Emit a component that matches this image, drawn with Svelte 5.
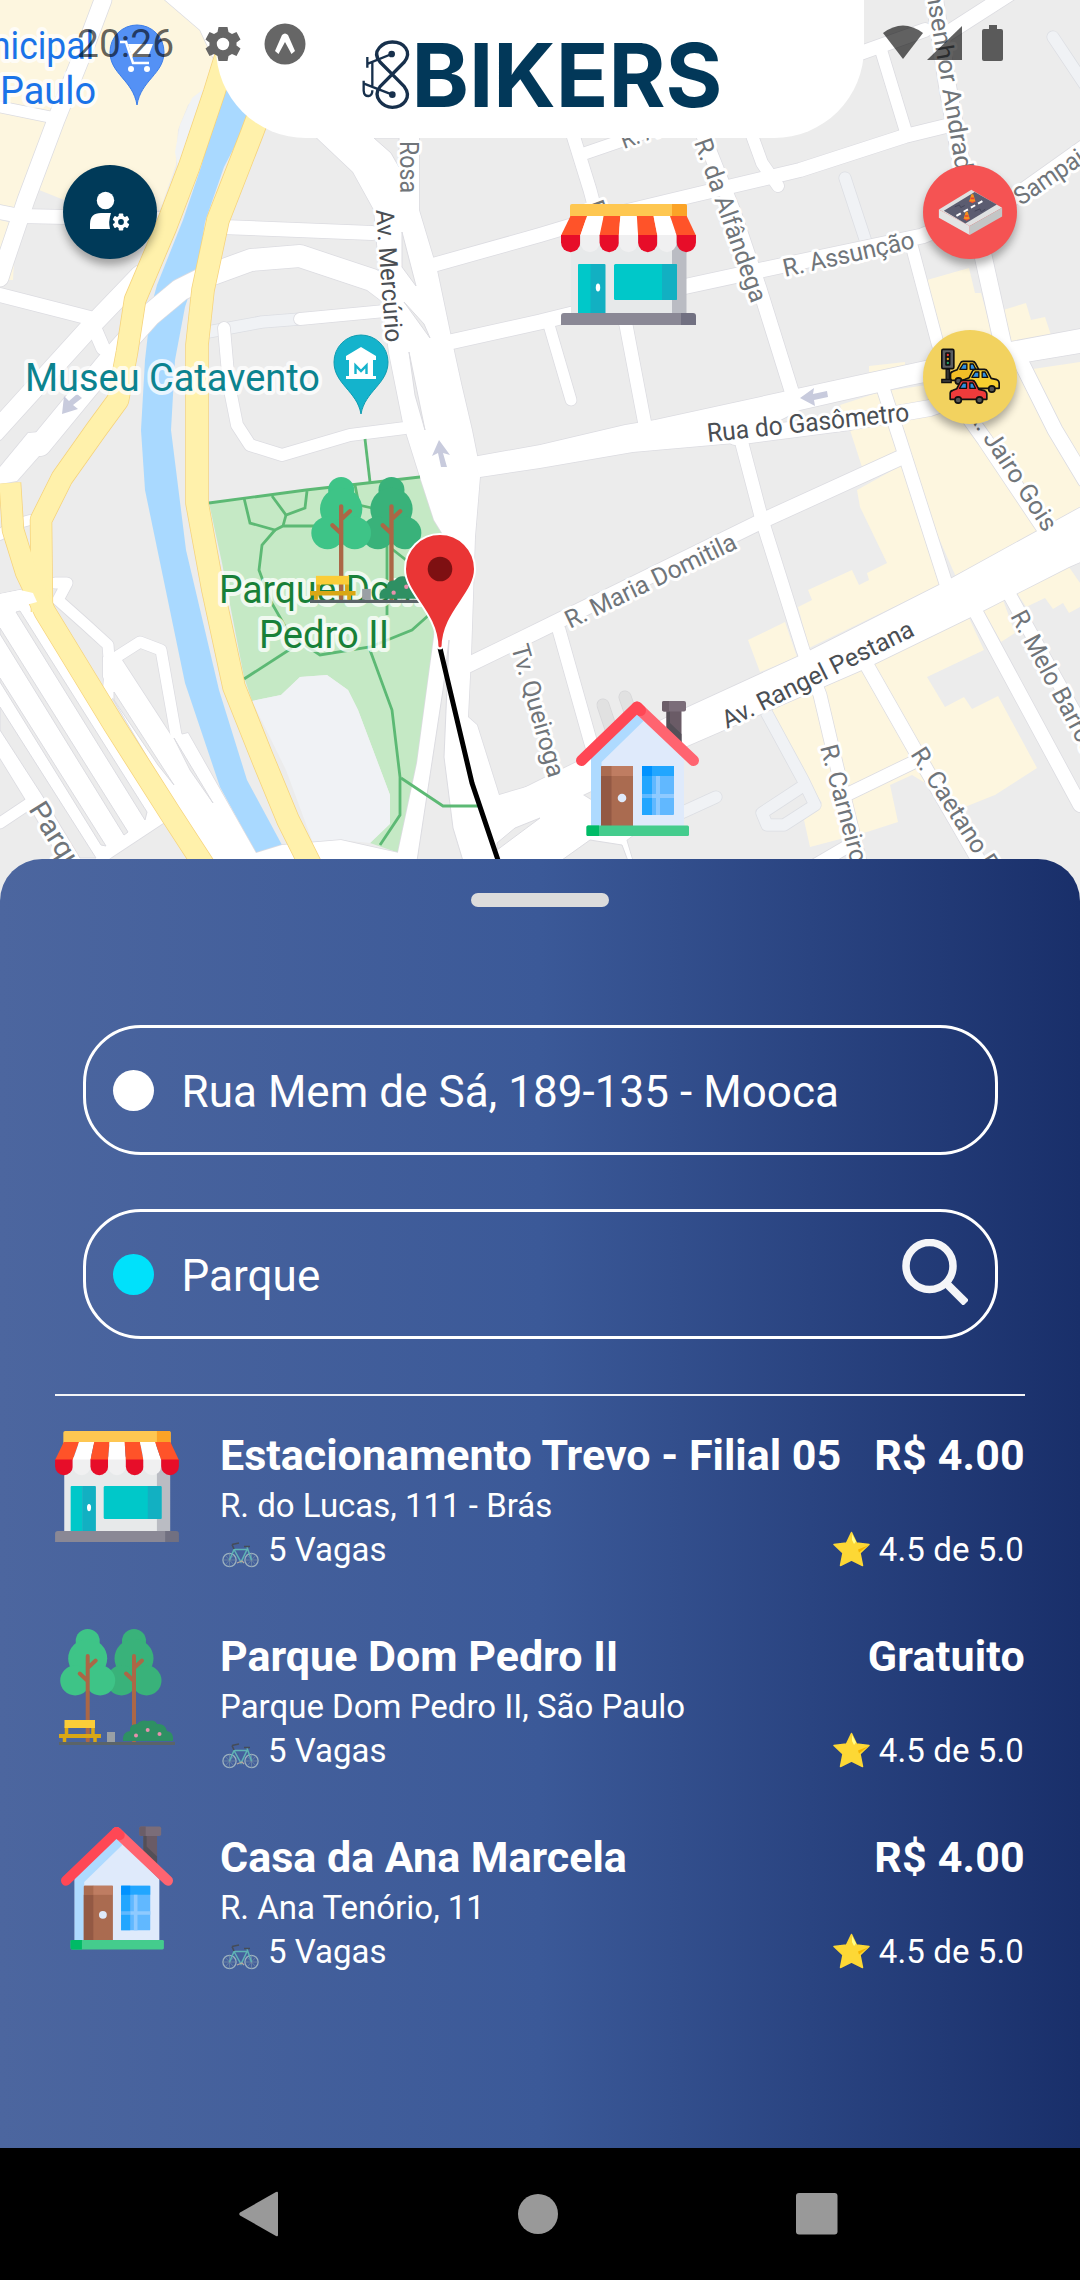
<script>
  // Map geometry, in screen units of the 1080 px wide canvas.
  const cream = [
    '0,0 167,0 208,35 217,63 205,88 188,105 178,130 176,165 160,210 64,200 39,190 30,215 0,215',
    '0,220 16,224 13,280 0,280',
    '927,280 969,268 975,293 981,293 995,345 940,345',
    '1003,310 1026,303 1031,320 1045,317 1051,335 1010,342',
    '840,405 880,392 1080,362 1080,507 956,577 900,450 862,467 850,430',
    '857,490 902,465 941,584 809,648 798,607 812,600 808,590 852,570 859,585 869,580 867,573 887,563 860,507',
    '869,366 905,362 905,370 869,372',
    '748,640 785,622 797,657 760,672',
    '768,712 862,670 969,618 984,650 927,677 945,707 964,697 972,709 998,696 1037,768 995,795 965,807 912,775 890,785 898,822 867,832 810,847 804,820 822,803 800,770',
    '983,610 1003,600 1015,633 1001,642',
    '1017,593 1069,567 1080,583 1080,607 1069,613 1063,603 1053,609 1045,598 1026,607',
  ];

  const minor = [
    ['M103 0L85 48L56 120L26 200L5 262L0 278', 17],
    ['M0 107L50 117', 11],
    ['M0 212L20 216L160 219', 14],
    ['M0 295L90 318L103 348', 14],
    ['M-5 432L92 325L140 275', 19],
    ['M40 445L110 360L150 315L180 290L210 275L251 260L300 256L372 280L405 305L430 345', 22],
    ['M222 227L372 233', 14],
    ['M300 319L385 311', 12],
    ['M224 328L229 385L237 425L250 445L282 455L350 435L405 428', 12],
    ['M433 265L540 235L590 220L690 196L800 170L905 136L950 125', 14],
    ['M450 342L540 322L678 288L780 266L922 236L1010 200L1090 143', 15],
    ['M572 132L590 190L626 325L646 430', 13],
    ['M549 325L571 400', 11],
    ['M580 155L650 131', 12],
    ['M702 132L733 210L760 290L795 402', 14],
    ['M741 440L762 520L803 650L820 695L836 763L862 870', 13],
    ['M750 130L762 163L778 186', 12],
    ['M881 50L906 132', 12],
    ['M855 55L925 30', 14],
    ['M945 35L1012 -8', 15],
    ['M934 -5L947 83L962 167L984 260L1003 345', 17],
    ['M955 398L985 440L1052 540', 15],
    ['M1020 360L1055 430L1085 480', 15],
    ['M912 247L938 345', 12],
    ['M882 385L900 440L948 590', 13],
    ['M902 457L764 520L540 630L468 665', 15],
    ['M559 630L590 740L633 885', 13],
    ['M1008 592L1080 722', 13],
    ['M972 605L1080 805', 14],
    ['M865 662L915 750L990 880', 14],
    ['M912 763L848 794', 13],
    ['M785 883L850 845', 13],
    ['M735 437L850 422L930 408L960 398', 16],
    ['M0 535L12 525L30 520', 10],
    ['M55 583L67 583L58 600L85 624L108 645L110 672L108 695', 11],
    ['M118 656L140 642L161 650L176 735L235 840', 11],
    ['M0 823L30 803', 11],
  ];

  const areas = [
    '317,138 353,172 374,210 382,300 389,353 403,423 420,477 434,520 442,533 434,637 417,763 390,890 552,890 590,840 583,795 540,783 499,795 477,725 468,717 471,657 475,537 480,477 477,455 472,430 461,383 451,337 437,270 419,210 419,138',
    '467,458 540,445 625,425 655,420 925,361 1010,342 1080,329 1080,353 1020,363 910,385 800,410 735,443 633,452 540,468 467,479',
    '480,810 540,780 686,708 797,657 941,584 1090,502 1090,558 1069,567 969,618 862,670 685,747 583,795 640,830 560,890 480,890',
    '0,467 28,433 62,430 17,481 0,484',
    '0,594 20,590 35,594 168,820 112,857 100,866 75,885 24,797 0,758',
    '103,657 122,660 172,737 188,733 256,853 282,845 341,840 399,853 399,890 226,890 114,700 103,677',
    '165,0 200,30 217,66 330,90 330,0',
  ];

  // blocks left between rail tracks and merging carriageways
  const islands = [
    'M374 138H399V167L391 153z',
    'M402 232L416 286L402 267z',
    'M404 302L424 324L430 338z',
    'M409 352L425 430L415 395z',
    'M449 640L444 757L453 828L463 861L417 861L443 690z',
    'M497 843L515 828L540 818L497 850z',
    'M16 612L20 611L147 812L145 820z',
    'M0 628L128 832L124 835L0 634z',
    'M0 678L106 846L101 845L0 682z',
    'M0 707L96 858L80 858L42 795L0 730z',
    'M548 870L590 840L622 845L628 861z',
    'M114 692L174 785L158 765L114 700z',
    'M174 738L213 803L190 770z',
  ];

  const yellow = [
    ['M236 22L214 93L189 167L166 227L135 300L127 352L118 400L96 430L62 478L41 520L42 612', 21],
    ['M10 483L13 530L26 572L45 612L114 725L170 813L222 893', 21],
    ['M270 85L252 133L218 220L203 290L197 345L197 430L197 503L213 590L234 687L262 757L288 820L318 880', 22],
  ];

  const parkPaths = [
    'M209 503L306 490L420 477', 'M365 439L370 482', 'M244 498L250 523L275 530L283 526H315',
    'M272 496L286 515L305 508L307 491', 'M286 515L283 526', 'M275 530L262 545L259 570L270 600L290 635L320 655L370 647L412 630L430 614',
    'M244 679L292 648', 'M355 485L359 505L372 508', 'M387 545V615', 'M392 549L406 560',
    'M370 650L392 710L400 777V815L380 845', 'M401 778L443 806H478',
  ];

  // text, x, y, angle, length, size, kind
  const streets = [
    ['Rosa', 400, 141, 90, 52, 25, ''],
    ['Av. Mercúrio', 376, 210, 85.8, 133, 25, 'main'],
    ['R. da Alfândega', 694, 142, 70.5, 172, 25, ''],
    ['R. Assunção', 785, 277, -12.6, 134, 25, ''],
    ['Rua do Gasômetro', 708, 442, -6, 203, 26, 'main'],
    ['nsenhor Andrade', 926, -8, 80.5, 195, 25, ''],
    ['Sampaio', 1021, 206, -34, 92, 25, ''],
    ['R. A', 624, 149, -20, 38, 25, ''],
    ['R.', 586, 204, 70, 22, 25, ''],
    ['R. Jairo Gois', 967, 414, 57, 142, 25, ''],
    ['R. Maria Domitila', 570, 629, -25.7, 187, 25, ''],
    ['Av. Rangel Pestana', 727, 729, -26.5, 211, 25, 'main'],
    ['R. Melo Barros', 1010, 616, 62, 158, 25, ''],
    ['R. Carneiro Leão', 820, 747, 75, 182, 25, ''],
    ['R. Caetano Pinto', 910, 754, 57.5, 184, 25, ''],
    ['Tv. Queiroga', 511, 647, 74, 137, 25, ''],
    ['Parque', 28, 809, 58, 92, 28, ''],
  ];

  const places = [
    { art: 'shop', name: 'Estacionamento Trevo - Filial 05', price: 'R$ 4.00', address: 'R. do Lucas, 111 - Brás' },
    { art: 'park', name: 'Parque Dom Pedro II', price: 'Gratuito', address: 'Parque Dom Pedro II, São Paulo' },
    { art: 'house', name: 'Casa da Ana Marcela', price: 'R$ 4.00', address: 'R. Ana Tenório, 11' },
  ];

  const teeth = [0, 60, 120, 180, 240, 300];
</script>

{#snippet shop()}
  <svg class="art-shop" viewBox="0 0 135 121">
    <path fill="#e7e9ea" d="M10 28H112V110H10z" />
    <path fill="#babcc3" d="M111 28H125.500V110H111z" />
    <rect x="9" width="117" height="15" rx="2" fill="#fec751" />
    <path fill="#fba327" d="M111 0H124Q126 0 126 2V14H111z" />
    {#each [0, 1, 2, 3, 4, 5, 6] as i}
      <path
        fill={i % 2 ? '#fff' : '#ff5329'}
        d="M{9.5 + i * 16.6} 12H{9.5 + (i + 1) * 16.6}L{(i + 1) * 19.28} 31.500H{i * 19.28}z"
      />
      <path
        fill={i % 2 ? '#f0f0f1' : '#e70d29'}
        d="M{i * 19.28} 31H{(i + 1) * 19.28}V38.500a9.640 9.640 0 0 1-19.280 0z"
      />
    {/each}
    <path fill="#00c8c9" d="M17 61Q17 60 18 60H30V109H17z" />
    <path fill="#12b0c2" d="M29.500 60H43.500Q44.500 60 44.500 61V109H29.500z" />
    <ellipse cx="37" cy="83.500" rx="2.200" ry="4" fill="#fff" />
    <rect x="53" y="60" width="63" height="36" rx="1.500" fill="#00c8c9" />
    <path fill="#12b0c2" d="M101 60H115Q116 60 116 61V95Q116 96 115 96H101z" />
    <path fill="#8a8895" d="M0 121V112Q0 109 3 109H121V121z" />
    <path fill="#717081" d="M120 109H132Q135 109 135 112V121H120z" />
  </svg>
{/snippet}

{#snippet tree(x, color)}
  <g fill={color} transform="translate({x} 0)">
    <circle cx="0" cy="12" r="12" />
    <circle cx="0" cy="29.500" r="19.500" />
    <circle cx="-12.500" cy="51.500" r="15" />
    <circle cx="12.500" cy="51.500" r="15" />
    <path fill="none" stroke="#ab6746" stroke-width="4" stroke-linecap="round" d="M0 27V112M0 39L8 31.500M0 52L-8 44.500" />
  </g>
{/snippet}

{#snippet park()}
  <svg class="art-park" viewBox="0 0 116 116">
    {@render tree(75, '#39b27a')}
    {@render tree(28.7, '#3ec487')}
    <path fill="#2e9063" d="M64 112Q63 103 71 102Q70 95 78 95Q82 90 89 92Q96 90 98 95Q106 94 108 102Q115 103 114 112z" />
    <g fill="#e791ad"><circle cx="77" cy="106.500" r="2" /><circle cx="88.700" cy="101" r="2" /><circle cx="100.500" cy="105" r="2" /></g>
    <path fill="#9aa0a5" d="M48 103H56V113H48z" />
    <path fill="#5b6468" d="M0 113H116V116H0z" />
    <path stroke="#d9a715" stroke-width="3.500" d="M7.500 97V106M34 97V106M5.500 108V113M36 108V113" />
    <path fill="#d9a715" d="M0 105H42V109H0z" />
    <rect x="5.500" y="91" width="30.500" height="8" fill="#fbcd38" />
  </svg>
{/snippet}

{#snippet house()}
  <svg class="art-house" viewBox="0 0 123 135">
    <path fill="#6a5b66" d="M90.500 8H105.500V42L90.500 28z" />
    <path fill="#544f57" d="M90.500 8H94V22L105.500 33V42L90.500 28z" />
    <rect x="86" width="24" height="10.500" rx="2" fill="#7b6d79" />
    <path fill="#6b5d68" d="M88 0H93V10.500H88Q86 10.500 86 8.500V2Q86 0 88 0z" />
    <path fill="#dfeafb" d="M61 11L108 58V126H15V58z" />
    <path fill="#aedaff" d="M15 57L61 13L67.500 20L25.500 61V126H15z" />
    <path fill="none" stroke="#ff6470" stroke-width="11" stroke-linecap="round" d="M61 6L117.500 59.500" />
    <path fill="none" stroke="#ff4755" stroke-width="11" stroke-linecap="round" stroke-linejoin="round" d="M5.500 59.500L61 6L64.500 9.500" />
    <rect x="25" y="65" width="32" height="61" rx="1" fill="#aa6b50" />
    <path fill="#bf7d62" d="M35 65H57V75H35z" />
    <path fill="#935944" d="M25 75H35.500V126H25z" />
    <path fill="#aa6b50" d="M25.500 65H35.500V75H25.500z" />
    <circle cx="46" cy="97" r="4.300" fill="#dfeafb" />
    <rect x="66" y="65" width="32" height="49" rx="1" fill="#61b8ff" />
    <path fill="#22a6ff" d="M66 65H98V75H76V114H66z" />
    <path fill="#8fcaff" d="M80 75H84V114H80zM76 93H98V97H76z" />
    <path fill="#0092ff" d="M66 65H76V75H66z" />
    <path fill="#5fb9ff" d="M66 93H76V97H66z" />
    <rect x="10.500" y="124.500" width="102.500" height="10.500" rx="1.500" fill="#44cc8d" />
    <path fill="#00bb66" d="M12 124.500H23V135H12Q10.500 135 10.500 133.500V126Q10.500 124.500 12 124.500z" />
  </svg>
{/snippet}

{#snippet car(x, y, color)}
  <g transform="translate({x} {y})" stroke="#111" stroke-width="5" stroke-linejoin="round">
    <path fill={color} d="M2 60V42Q2 35 10 33L22 28L32 8Q34 3 40 3H68Q74 3 77 9L88 30L105 34Q112 37 112 45V60z" />
    <path fill="#2f8fe0" stroke-width="4" d="M30 27L40 11H51V27zM61 11H70L78 27H61z" />
    <circle cx="26" cy="62" r="9.500" fill="#555" />
    <circle cx="90" cy="62" r="9.500" fill="#555" />
  </g>
{/snippet}

<div class="phone">
  <section class="map">
    <svg class="canvas" viewBox="0 0 1080 901">
      <rect width="1080" height="901" fill="#ececec" />
      {#each cream as points}<polygon {points} fill="#fdf6df" />{/each}
      <path fill="#f1f3f5" d="M205 88L192 98L180 125L175 152L178 168z" />
      <path fill="#a9d9ff" d="M222 90L250 95L250 117L224 167L205 222L198 268L185 307L175 360L171 430L186 550L219 690L247 780L282 845L256 853L220 787L185 683L145 490L141 430L145 360L151 307L157 285L183 220L201 167z" />
      <path fill="#c5e9c5" d="M209 503L420 477L434 520L442 533L434 637L417 763L399 853L370 843L389 824L390 795L358 710L348 690L327 675L300 677L281 695L252 701L244 677L222 563z" />
      <path fill="#f0f2f5" d="M252 701L281 695L300 677L327 675L348 690L358 710L390 795V824L370 843L341 840L313 843L286 770z" />
      <g fill="none" stroke-linecap="round" stroke-linejoin="round">
        <path stroke="#d6d6d8" stroke-width="13" d="M603 705L618 750M625 697L640 740" />
        <path stroke="#e1e1e1" stroke-width="11.500" d="M603 705L618 750M625 697L640 740" />
        <path stroke="#dcdee3" stroke-width="13" d="M845 178L867 245M1053 37L1085 85M716 797L670 818M765 710L803 780L815 805L784 825H767L762 813L800 788M208 332L262 322L300 319" />
        <path stroke="#f0f2f5" stroke-width="11.500" d="M845 178L867 245M1053 37L1085 85M716 797L670 818M765 710L803 780L815 805L784 825H767L762 813L800 788M208 332L262 322L300 319" />
        {#each minor as [d, w]}<path {d} stroke="#dcdce1" stroke-width={w + 1.5} />{/each}
        {#each areas as points}<polygon {points} stroke="#dcdce1" stroke-width="1.500" />{/each}
        {#each minor as [d, w]}<path {d} stroke="#fff" stroke-width={w} />{/each}
        {#each areas as points}<polygon {points} fill="#fff" />{/each}
      </g>
      <g fill="#ececec" stroke="#dcdce1" stroke-width="1">
        {#each islands as d}<path {d} />{/each}
      </g>
      <g fill="none" stroke="#5cb974" stroke-width="2.800">
        {#each parkPaths as d}<path {d} />{/each}
      </g>
      <g fill="none" stroke-linejoin="round">
        {#each yellow as [d, w]}<path {d} stroke="#f6d37c" stroke-width={w + 1.5} />{/each}
        {#each yellow as [d, w]}<path {d} stroke="#fff1ab" stroke-width={w} />{/each}
      </g>
      <path fill="#fff" d="M0 594L20 590L33 593L37 602L0 612z" />
      <g fill="#c8cbdd">
        <path d="M439 440L450 455L443 453L447 467H441L438 453L432 456z" />
        <path d="M800 398L814 388L813 394L827 391L828 397L814 400L815 406z" />
        <path d="M62 414L64 396L69 401L77 394L82 398L73 405L78 409z" />
      </g>
      <path fill="none" stroke="#000" stroke-width="5" d="M440 648L472 783L500 866" />

      {#each streets as [text, x, y, angle, length, size, kind]}
        <text class="street {kind}" transform="translate({x} {y}) rotate({angle})" textLength={length} lengthAdjust="spacingAndGlyphs" font-size={size}>{text}</text>
      {/each}
      <text class="poi shopping" x="94" y="59" text-anchor="end" textLength="103" lengthAdjust="spacingAndGlyphs">nicipal</text>
      <text class="poi shopping" x="0" y="104" textLength="96" lengthAdjust="spacingAndGlyphs">Paulo</text>
      <text class="poi museum" x="25" y="391" textLength="295" lengthAdjust="spacingAndGlyphs">Museu Catavento</text>
      <text class="poi garden" x="219" y="603" textLength="205" lengthAdjust="spacingAndGlyphs">Parque Dom</text>
      <text class="poi garden" x="259" y="648" textLength="130" lengthAdjust="spacingAndGlyphs">Pedro II</text>

      <g>
        <path fill="#5491f5" stroke="#3b7de8" d="M137 105C133 80 110 74 110 52A27 27 0 0 1 164 52C164 74 141 80 137 105z" />
        <path fill="none" stroke="#fff" stroke-width="2.500" d="M120 42H126L133 63H149" />
        <path fill="#fff" d="M128 44H153L148 57H132z" />
        <circle cx="131" cy="69" r="3" fill="#fff" /><circle cx="147" cy="69" r="3" fill="#fff" />
      </g>
      <g>
        <path fill="#14b3cc" stroke="#0f9cb0" d="M361 414C357 391 334 384 334 362A27 27 0 0 1 388 362C388 384 365 391 361 414z" />
        <path fill="#fff" d="M361 347L376 356V360H346V356zM349 360H373V376H376V379H346V376H349z" />
        <path fill="none" stroke="#14b3cc" stroke-width="2.400" d="M355.500 374V365.500L361 371L366.500 365.500V374" />
      </g>
    </svg>

    <div class="marker shop-marker">{@render shop()}</div>
    <div class="marker park-marker">{@render park()}</div>
    <div class="marker house-marker">{@render house()}</div>
    <svg class="marker pin" viewBox="0 0 74 118">
      <path fill="#ea3535" stroke="#fff" stroke-width="2" d="M34.500 115C34 80 2 62 2 37A35 35 0 0 1 72 37C72 62 40 80 39.500 115Q37 118 34.500 115z" />
      <circle cx="37" cy="37" r="12.300" fill="#7e1012" />
    </svg>

    <header class="brand">
      <svg class="wordmark" viewBox="0 0 360 80" role="img" aria-label="8Bikers">
        <g transform="translate(-20 -7) scale(.33333)" fill="none" stroke="#17304c" stroke-width="10" stroke-linejoin="round">
          <path d="M157 136L120 99C92 65 130 39 157 39C192 39 217 68 193 99L120 173C95 205 130 235 157 235C190 235 217 205 193 173z" />
          <path stroke-width="7" d="M155 75L84 104M82 84V116M97 100V172M157 197L72 164" />
          <path stroke-width="7" d="M71 155V185Q72 202 86 201Q97 200 97 184" />
          <circle cx="155" cy="75" r="5" fill="#17304c" /><circle cx="157" cy="197" r="5" fill="#17304c" />
        </g>
        <text x="51.500" y="71" textLength="311" lengthAdjust="spacingAndGlyphs">BIKERS</text>
      </svg>
    </header>

    <div class="status">
      <div class="status-side">
        <span class="clock">20:26</span>
        <svg class="gear" viewBox="-18 -18 36 36">
          <path fill-rule="evenodd" fill="#666" d="M-4.500-17H4.500L5.500-12L9-10L13.500-12L17.500-4.500L13.500-1.500V1.500L17.500 4.500L13.500 12L9 10L5.500 12L4.500 17H-4.500L-5.500 12L-9 10L-13.500 12L-17.500 4.500L-13.500 1.500V-1.500L-17.500-4.500L-13.500-12L-9-10L-5.500-12zM0-6.200A6.200 6.200 0 1 0 0 6.200A6.200 6.200 0 1 0 0-6.200z" />
        </svg>
        <svg class="expo" viewBox="0 0 42 42">
          <circle cx="21" cy="21" r="20.500" fill="#666" />
          <path fill="#fff" d="M18 12Q21 9 24 12L31 28L27.500 31L21 19L14.500 31L11 28z" />
        </svg>
      </div>
      <svg class="signals" viewBox="0 0 122 38">
        <g fill="#000" fill-opacity=".62">
          <path d="M1 8Q21-7 41 8L21 34z" />
          <path d="M80 1V35H45z" />
          <path d="M107 0H115V4H119Q121 4 121 6V34Q121 36 119 36H102Q100 36 100 34V6Q100 4 102 4H107z" />
        </g>
      </svg>
    </div>

    <button class="fab profile" aria-label="Perfil">
      <svg width="40" height="42" viewBox="0 0 40 42">
        <circle cx="15.500" cy="9.500" r="8.700" fill="#fff" />
        <path fill="#fff" d="M0 38V33Q0 22 11 22H21Q18 31 20 38z" />
        <g transform="translate(31 31)" fill="#fff">
          <circle r="9" fill="#003a59" />
          <circle r="6.400" />
          {#each teeth as a}<rect x="-2.300" y="-8.500" width="4.600" height="4" rx="1" transform="rotate({a})" />{/each}
          <circle r="2.900" fill="#003a59" />
        </g>
      </svg>
    </button>
    <button class="fab road" aria-label="Vias">
      <svg width="65" height="47" viewBox="110 118 195 142">
        <path fill="#dfe1e1" d="M112 180L210 120L303 175L205 230z" />
        <path fill="#e3e4e4" d="M112 180L205 230V257L112 205z" />
        <path fill="#c3c6c6" d="M205 230L303 175V201L205 257z" />
        <path fill="#5b5c70" d="M127 184L220 127L287 165L192 222z" />
        <path stroke="#fff" stroke-width="6" stroke-dasharray="15 10" d="M165 199L252 150" />
        <path fill="none" stroke="#45465a" stroke-width="3" d="M160 172L174 166L178 174L190 168M220 185L236 178L240 187L252 179" />
        {#each [[213, 134], [196, 187]] as [x, y]}
          <path fill="#ee4d35" d="M{x - 11} {y + 21}L{x} {y + 27}L{x + 11} {y + 21}L{x} {y + 15}z" />
          <path fill="#f5921f" d="M{x - 9} {y + 20}L{x - 3} {y}H{x + 3}L{x + 9} {y + 20}Q{x} {y + 25} {x - 9} {y + 20}z" />
          <path fill="#e8432f" d="M{x - 5} {y + 10}H{x + 5}L{x + 6} {y + 15}H{x - 6}z" />
        {/each}
      </svg>
    </button>
    <button class="fab traffic" aria-label="Trânsito">
      <svg width="61" height="59" viewBox="116 589 182 177">
        {@render car(145, 626, '#f2bf27')}
        {@render car(181, 650, '#f8cf2f')}
        {@render car(144, 683, '#ef3b3b')}
        <rect x="121" y="593" width="36" height="58" rx="4" fill="#5a5d61" stroke="#111" stroke-width="5" />
        <rect x="131" y="602" width="16" height="40" rx="3" fill="#111" />
        <circle cx="139" cy="610" r="3.500" fill="#e33" /><circle cx="139" cy="622" r="3.500" fill="#e9a520" /><circle cx="139" cy="634" r="3.500" fill="#27a567" />
        <path fill="#333" stroke="#111" stroke-width="4" d="M134 653H144V683H134zM121 683H149V693H121z" />
      </svg>
    </button>
  </section>

  <main class="sheet">
    <div class="handle"></div>
    <div class="fields">
      <div class="field"><span class="dot"></span><span class="value">Rua Mem de Sá, 189-135 - Mooca</span></div>
      <div class="field">
        <span class="dot cyan"></span><span class="value">Parque</span>
        <svg class="search" viewBox="0 0 66 66" fill="none" stroke="#f4f5f8">
          <circle cx="27.500" cy="27" r="23.500" stroke-width="7.500" />
          <path stroke-width="8" d="M44 44L64 64" />
        </svg>
      </div>
    </div>
    <div class="results">
      {#each places as place}
        <article class="place">
          <div class="thumb">
            {#if place.art === 'shop'}{@render shop()}{:else if place.art === 'park'}{@render park()}{:else}{@render house()}{/if}
          </div>
          <div class="details">
            <div class="line title"><span>{place.name}</span><span class="price">{place.price}</span></div>
            <div class="line address"><span>{place.address}</span></div>
            <div class="line meta">
              <span class="with-icon">
                <svg class="bike" viewBox="0 0 37 26" fill="none">
                  <g stroke="#9bb0bf" stroke-width="1.300"><circle cx="7.500" cy="18" r="6.600" /><circle cx="29.500" cy="18" r="6.600" /></g>
                  <g stroke="#7f96a9" stroke-width=".6"><path d="M1 18H14M7.500 11V25M3 13L12 23M12 13L3 23M23 18H36M29.500 11V25M25 13L34 23M34 13L25 23" /></g>
                  <path stroke="#5fb3b5" stroke-width="1.500" d="M7.500 18L12 7.500H25L19 20L12 7.500M25 5L29.500 18" />
                  <path stroke="#454c58" stroke-width="1.600" d="M10 2.500L12 7M10 2.500L17 1M22 4.500H28" />
                  <path stroke="#b6a9a0" stroke-width="1.200" d="M15 21L20 19L22 21" />
                </svg>
                5 Vagas
              </span>
              <span class="with-icon rating">
                <svg class="star" viewBox="0 0 37 36">
                  <path fill="#fdd835" stroke="#fdd835" stroke-width="1.500" stroke-linejoin="round" d="M18.500 1.500L23.500 12L36 13.500L27 22L29.500 34.500L18.500 29L7.500 34.500L10 22L1 13.500L13.500 12z" />
                  <path fill="#ffff8d" d="M19 3L23 10.500L21 13L19 9z" />
                  <path fill="#f4b400" d="M35 14.500L25 18.500L26 21.500z" />
                </svg>
                4.5 de 5.0
              </span>
            </div>
          </div>
        </article>
      {/each}
    </div>
  </main>

  <nav class="system-nav">
    <svg width="40" height="46" viewBox="0 0 40 46"><path fill="#999" d="M37 1Q39 0 39 2V44Q39 46 37 45L1 24.500Q-.500 23 1 21.500z" /></svg>
    <svg width="40" height="40" viewBox="0 0 40 40"><circle cx="20" cy="20" r="20" fill="#999" /></svg>
    <svg width="42" height="42" viewBox="0 0 42 42"><rect width="41.500" height="41.500" rx="3" fill="#999" /></svg>
  </nav>
</div>

<style>
  :global(body) { margin: 0; background: #000; }
  .phone {
    width: 1080px;
    height: 2280px;
    display: flex;
    flex-direction: column;
    overflow: hidden;
    font-family: Roboto, sans-serif;
    color: #fff;
  }
  svg { display: block; flex: none; }

  .map { position: relative; height: 901px; flex: none; overflow: hidden; }
  .canvas { width: 1080px; height: 901px; }
  .street { fill: #70757a; stroke: #fff; stroke-width: 6px; stroke-linejoin: round; paint-order: stroke; }
  .street.main { fill: #4a4e53; }
  .poi { font-size: 39px; stroke: rgba(255, 255, 255, 0.75); stroke-width: 8px; stroke-linejoin: round; paint-order: stroke; }
  .shopping { fill: #1a73e8; }
  .museum { fill: #0c838f; }
  .garden { fill: #188038; }

  .marker { position: absolute; }
  .marker svg { width: 100%; height: 100%; }
  .shop-marker { left: 561px; top: 204px; width: 135px; height: 121px; }
  .park-marker { left: 310px; top: 477px; width: 126px; height: 126px; }
  .house-marker { left: 576px; top: 701px; width: 123px; height: 135px; }
  .pin { left: 403px; top: 532px; width: 74px; height: 118px; }

  .brand {
    position: absolute;
    top: 0;
    left: 216px;
    width: 648px;
    height: 138px;
    background: #fff;
    border-radius: 0 0 90px 90px;
    display: flex;
    justify-content: center;
  }
  .wordmark { width: 360px; height: 80px; margin-top: 36px; overflow: visible; }
  .wordmark text { font: 700 88px Inter, sans-serif; fill: #023859; }

  .status {
    position: absolute;
    inset: 0 0 auto;
    height: 86px;
    padding: 1px 76px 0 77px;
    box-sizing: border-box;
    display: flex;
    justify-content: space-between;
    align-items: center;
  }
  .status-side { display: flex; align-items: center; }
  .clock { width: 98px; font-size: 39px; color: rgba(0, 0, 0, 0.62); }
  .gear { width: 36px; height: 36px; margin-left: 30px; }
  .expo { width: 42px; height: 42px; margin-left: 23px; }
  .signals { width: 122px; height: 38px; }

  .fab {
    position: absolute;
    width: 94px;
    height: 94px;
    padding: 0;
    border: 0;
    border-radius: 50%;
    display: grid;
    place-items: center;
    box-shadow: 0 6px 9px rgba(0, 0, 0, 0.32);
  }
  .profile { left: 63px; top: 165px; background: #003a59; }
  .road { left: 923px; top: 165px; background: #f55353; }
  .traffic { left: 923px; top: 330px; background: #f2d25f; }

  .sheet {
    position: relative;
    height: 1289px;
    flex: none;
    margin-top: -42px;
    border-radius: 42px 42px 0 0;
    background: linear-gradient(90deg, #4c669f, #3b5998 50%, #192f6a);
    display: flex;
    flex-direction: column;
    align-items: center;
  }
  .handle { width: 138px; height: 14px; margin-top: 34px; border-radius: 7px; background: #dcdcdc; }
  .fields { width: 915px; margin-top: 118px; display: flex; flex-direction: column; gap: 54px; }
  .field {
    height: 130px;
    box-sizing: border-box;
    padding: 0 27px 0 27px;
    border: 3px solid #fff;
    border-radius: 58px;
    display: flex;
    align-items: center;
  }
  .dot { width: 41px; height: 41px; border-radius: 50%; background: #fff; }
  .dot.cyan { background: #00e1fb; }
  .value { flex: 1; margin-left: 28px; font-size: 44px; letter-spacing: 0.04px; padding-top: 3px; }
  .search { width: 66px; height: 66px; margin-top: -5px; }

  .results { width: 970px; margin-top: 55px; padding-top: 28px; border-top: 2px solid #f4f5f8; display: flex; flex-direction: column; gap: 77px; }
  .place { height: 124px; display: flex; gap: 41px; }
  .thumb { width: 124px; height: 124px; display: grid; place-items: center; }
  .art-shop { width: 124px; height: 111px; }
  .art-park { width: 116px; height: 116px; }
  .art-house { width: 112px; height: 124px; }
  .details { flex: 1; }
  .line { display: flex; justify-content: space-between; white-space: nowrap; }
  .title { font-size: 43px; font-weight: 700; line-height: 50px; margin-top: 6px; }
  .price { letter-spacing: 0.2px; }
  .address { font-size: 33px; line-height: 44px; margin-top: 4px; }
  .meta { font-size: 33px; line-height: 44px; }
  .with-icon { display: flex; align-items: center; }
  .rating { letter-spacing: 0.12px; padding-right: 1px; }
  .bike { width: 37px; height: 26px; margin: 9px 9px 0 2px; }
  .star { width: 37px; height: 36px; margin: -2px 9px 0 0; }

  .system-nav {
    height: 132px;
    padding: 0 123px 0 119px;
    background: #000;
    display: grid;
    grid-template-columns: repeat(3, 1fr);
    place-items: center;
  }
  .system-nav svg:nth-child(2) { margin-left: 1px; }
</style>
